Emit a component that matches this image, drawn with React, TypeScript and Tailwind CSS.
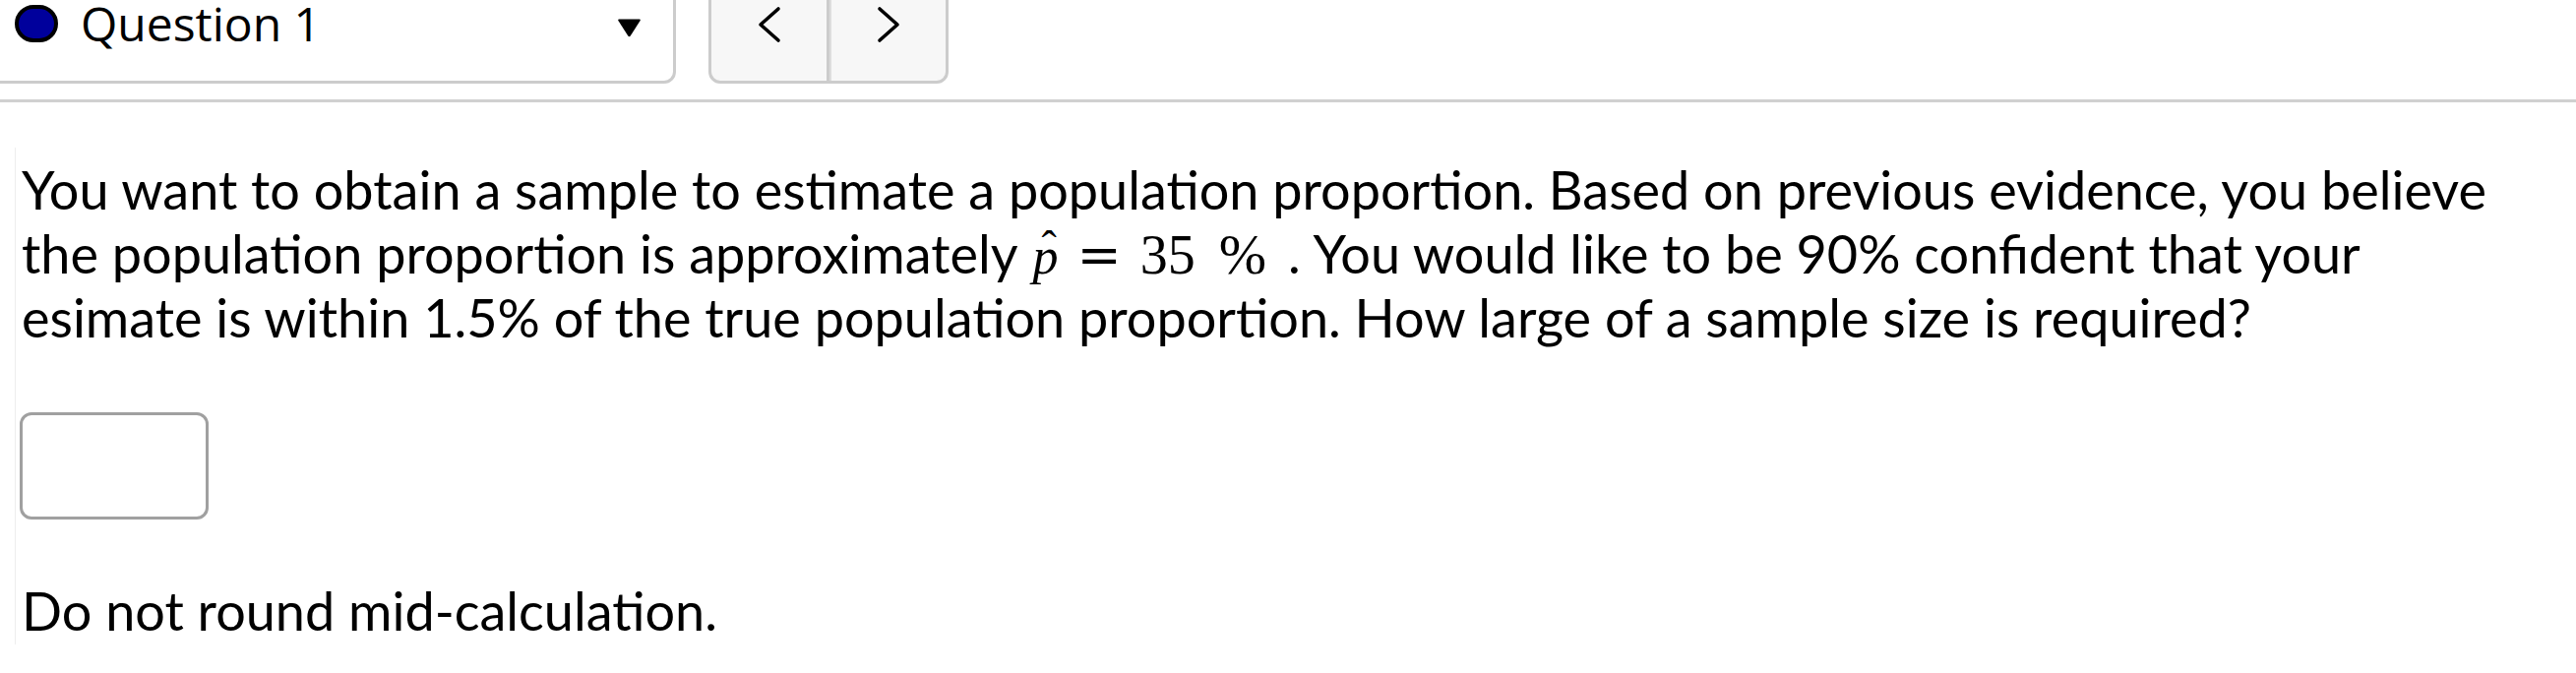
import React from 'react';

const Chevron = ({ dir }: { dir: 'left' | 'right' }) => (
  <svg width="24" height="38" viewBox="0 0 24 38" fill="none" stroke="#000" strokeWidth="3.6" strokeLinecap="round" strokeLinejoin="round">
    {dir === 'left' ? <path d="M21 3 L3 19 L21 35" /> : <path d="M3 3 L21 19 L3 35" />}
  </svg>
);

const QuestionHeader = () => (
  <div className="flex items-start h-[85px]">
    {/* question picker, its top and left edges run off the page */}
    <div className="-ml-[10px] -mt-[10px] w-[697px] h-[95px] flex items-start border-[3px] border-[#cccccc] rounded-br-[12px] bg-white pt-[7px]">
      <div className="ml-[22px] mt-[5px] w-[44px] h-[38px] rounded-full border-[4px] border-black bg-[#00009c]" />
      <span className="ml-[23px] font-['Open_Sans',sans-serif] text-[48px] leading-[48px] text-black">Question 1</span>
      <svg className="ml-auto mr-[32px] mt-[18px]" width="25" height="20" viewBox="0 0 25 20">
        <path d="M2 1.5 H23 Q24.5 1.5 23.6 3 L13.7 18.6 Q12.5 20 11.3 18.6 L1.4 3 Q0.5 1.5 2 1.5 Z" fill="#000" />
      </svg>
    </div>
    <div className="ml-[33px] -mt-[10px] h-[95px] flex border-[3px] border-[#cccccc] rounded-b-[12px] bg-[#f7f7f7]">
      <button className="w-[120px] h-full flex justify-center pt-[13px] border-r-[3px] border-[#cccccc]">
        <Chevron dir="left" />
      </button>
      <button className="w-[118px] h-full flex justify-center pt-[13px] border-l-[2px] border-[#dddddd]">
        <Chevron dir="right" />
      </button>
    </div>
  </div>
);

// p-hat = 35 %
const Math = () => (
  <>
    <span className="ml-[15px] relative inline-block font-['Liberation_Serif',serif] italic text-[52px] leading-none">
      p
      <span className="absolute left-[9px] -top-[6px] not-italic text-[46px]">ˆ</span>
    </span>
    <span className="ml-[19px] font-['DejaVu_Serif',serif] text-[54px] leading-none">=</span>
    <span className="ml-[19px] font-['Liberation_Serif',serif] text-[56px] leading-none">35</span>
    <span className="ml-[24px] font-['Liberation_Serif',serif] text-[58px] leading-none">%</span>
  </>
);

export default function App() {
  return (
    <div className="w-[2618px] h-[684px] bg-white overflow-hidden text-black">
      <QuestionHeader />
      <div className="mt-[16px] h-[3px] bg-[#d0d0d0]" />
      <div className="ml-[15px] mt-[46px] pt-[10px] pb-[2px] border-l border-[#eeeeee] font-['Lato',sans-serif]">
        <p className="pl-[6px] text-[54px] leading-[65px] whitespace-nowrap">
          You want to obtain a sample to estimate a population proportion. Based on previous evidence, you believe
          <br />
          the population proportion is approximately
          <Math />
          <span className="ml-[22px]">.</span>
          <span className="ml-[1px]"> You would like to be 90% confident that your</span>
          <br />
          esimate is within 1.5% of the true population proportion. How large of a sample size is required?
        </p>
        <input
          type="text"
          aria-label="answer"
          className="block ml-[4px] mt-[64px] w-[192px] h-[109px] border-[3px] border-[#a0a0a0] rounded-[12px] bg-white outline-none"
        />
        <p className="pl-[6px] mt-[60px] text-[54px] leading-[65px]">Do not round mid-calculation.</p>
      </div>
    </div>
  );
}
